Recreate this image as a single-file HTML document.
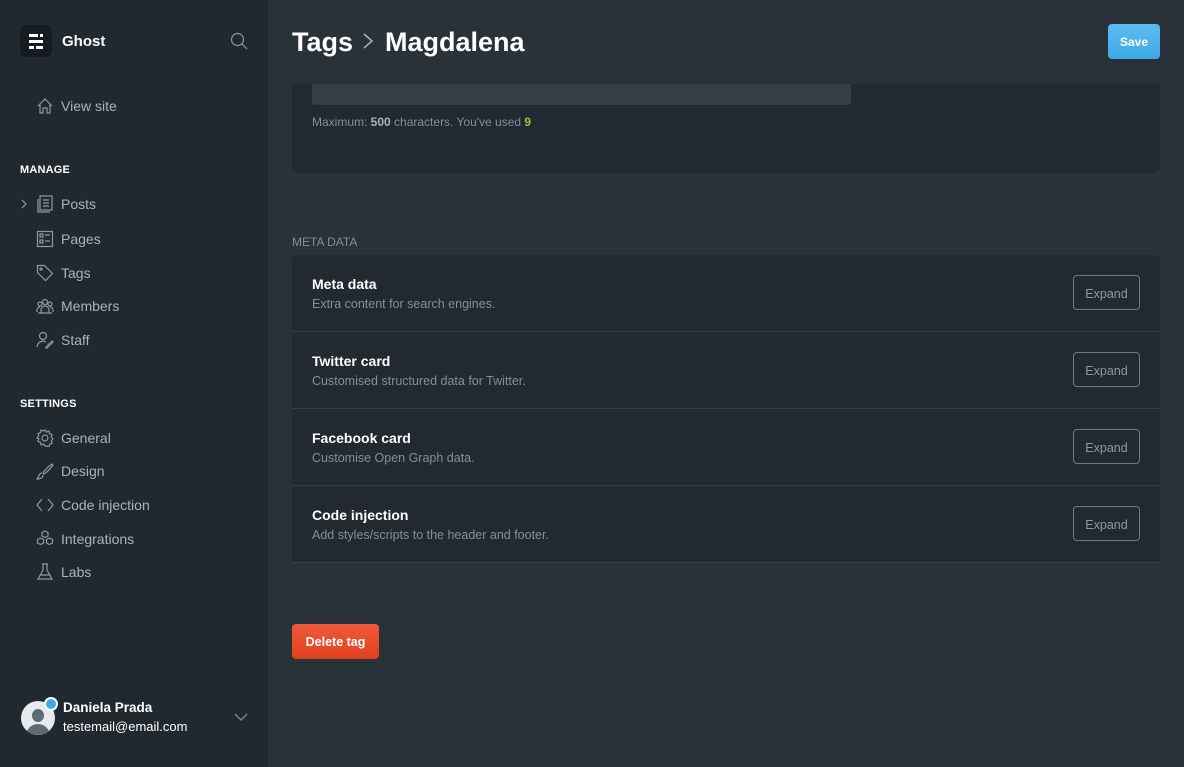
<!DOCTYPE html>
<html><head><meta charset="utf-8"><style>
*{box-sizing:border-box;margin:0;padding:0}
body{width:1184px;height:767px;overflow:hidden;background:#283238;font-family:"Liberation Sans",sans-serif;position:relative;color:#fff}
.sb{position:absolute;left:0;top:0;width:268px;height:767px;background:#212930}
.logo{position:absolute;left:20px;top:25px;width:32px;height:32px;background:#151b20;border-radius:6px}
.logo i{position:absolute;height:3px;background:#fff}
.brand{position:absolute;left:62px;top:33px;font-size:15px;font-weight:bold;color:#fff}
.nav{position:absolute;left:61px;font-size:14px;color:#a6b4bd}
.ic{position:absolute;left:36px;width:18px;height:18px}
.sec{position:absolute;left:20px;font-size:11px;font-weight:bold;color:#fff;letter-spacing:.2px}
h1{position:absolute;left:292px;top:27px;font-size:27px;font-weight:bold;color:#fff}
.save{position:absolute;left:1108px;top:24px;width:52px;height:35px;background:linear-gradient(#5bbcf2,#3ea8e8);border-radius:4px;color:#fff;font-size:12px;font-weight:bold;text-align:center;line-height:37px}
.card1{position:absolute;left:292px;top:84px;width:868px;height:89px;background:#222930;border-radius:0 0 8px 8px}
.ta{position:absolute;left:20px;top:0;width:539px;height:21px;background:#343e45;border-radius:0 0 3px 3px}
.hint{position:absolute;left:20px;top:31px;font-size:12px;color:#7f919c}
.lbl{position:absolute;left:292px;top:235px;font-size:12px;color:#7f919c}
.list{position:absolute;left:292px;top:255px;width:868px;height:308px;background:#222930;border-radius:6px 6px 0 0}
.row{position:absolute;left:0;width:868px;height:77px;border-bottom:1px solid #343e45}
.row b{position:absolute;left:20px;top:21px;font-size:14px;color:#fff}
.row span{position:absolute;left:20px;top:42px;font-size:12.5px;color:#7f919c}
.exp{position:absolute;left:781px;top:20px;width:67px;height:35px;border:1px solid #6b7c86;border-radius:4px;color:#8a9ba5;font-size:12.5px;text-align:center;line-height:36px}
.del{position:absolute;left:292px;top:624px;width:87px;height:35px;background:linear-gradient(#f05a3a,#e0401e);border-radius:4px;color:#fff;font-size:12.5px;font-weight:bold;text-align:center;line-height:37px}
svg{stroke:#8a9aa4;fill:none;stroke-width:1.2}
</style></head><body>
<div class="sb">
<div class="logo"><i style="left:9px;top:9px;width:9px"></i><i style="left:20px;top:9px;width:3px"></i><i style="left:9px;top:15px;width:14px"></i><i style="left:9px;top:21px;width:5px"></i><i style="left:16px;top:21px;width:7px"></i></div>
<div class="brand">Ghost</div>
<svg style="position:absolute;left:230px;top:32px" width="18" height="18" viewBox="0 0 18 18"><circle cx="7.5" cy="7.5" r="6"/><path d="M12 12l5 5"/></svg>
<svg class="ic" style="top:97px" viewBox="0 0 18 18"><path d="M2 9L9 2l7 7M4 7v9h3v-5h4v5h3V7"/></svg>
<div class="nav" style="top:98px">View site</div>
<div class="sec" style="top:164px">MANAGE</div>
<svg style="position:absolute;left:20px;top:198px" width="8" height="12" viewBox="0 0 8 12"><path d="M2 2l4 4-4 4"/></svg>
<svg class="ic" style="top:195px" viewBox="0 0 18 18"><rect x="4" y="1" width="12" height="14"/><path d="M2 4v13h12M7 5h6M7 8h6M7 11h6"/></svg>
<div class="nav" style="top:196px">Posts</div>
<svg class="ic" style="top:230px" viewBox="0 0 18 18"><rect x="1.5" y="1.5" width="15" height="15"/><path d="M4 4h3v3H4zM4 10h3v3H4zM9 5h5M9 11h5"/></svg>
<div class="nav" style="top:231px">Pages</div>
<svg class="ic" style="top:264px" viewBox="0 0 18 18"><path d="M1.5 1.5h7l8 8-7 7-8-8z"/><circle cx="5" cy="5" r="1"/></svg>
<div class="nav" style="top:265px">Tags</div>
<svg class="ic" style="top:297px" viewBox="0 0 18 18"><circle cx="9" cy="5" r="2.5"/><circle cx="4" cy="7" r="2"/><circle cx="14" cy="7" r="2"/><path d="M5 16v-3a4 4 0 018 0v3M1 15v-2a3 3 0 013-3M17 15v-2a3 3 0 00-3-3M2 16h14"/></svg>
<div class="nav" style="top:298px">Members</div>
<svg class="ic" style="top:331px" viewBox="0 0 18 18"><circle cx="7" cy="5" r="3.5"/><path d="M1 16a6 6 0 019-5M10 16l6-6 1 1-6 6h-1z"/></svg>
<div class="nav" style="top:332px">Staff</div>
<div class="sec" style="top:398px">SETTINGS</div>
<svg class="ic" style="top:429px" viewBox="0 0 18 18"><circle cx="9" cy="9" r="3"/><path d="M9 1l1.5 2 2.5-.8.5 2.5 2.5.8-.8 2.5 1.8 2-1.8 2 .8 2.5-2.5.8-.5 2.5-2.5-.8L9 17l-1.5-2-2.5.8-.5-2.5-2.5-.8.8-2.5L1 9l1.8-2L2 4.5l2.5-.8L5 1.2l2.5.8z"/></svg>
<div class="nav" style="top:430px">General</div>
<svg class="ic" style="top:462px" viewBox="0 0 18 18"><path d="M16 2c-3 2-7 6-9 9l1 1c3-2 7-6 9-9zM6 11c-2 0-3 2-3 3l-2 3c3 0 6-1 6-4"/></svg>
<div class="nav" style="top:463px">Design</div>
<svg class="ic" style="top:496px" viewBox="0 0 18 18"><path d="M6 3L1 9l5 6M12 3l5 6-5 6"/></svg>
<div class="nav" style="top:497px">Code injection</div>
<svg class="ic" style="top:530px" viewBox="0 0 18 18"><path d="M9 1l3 1.5v3.5L9 7.5 6 6V2.5zM4.5 8l3 1.5V13l-3 1.5-3-1.5V9.5zM13.5 8l3 1.5V13l-3 1.5-3-1.5V9.5z"/></svg>
<div class="nav" style="top:531px">Integrations</div>
<svg class="ic" style="top:563px" viewBox="0 0 18 18"><path d="M6 1h6M7 1v6L2 16h14l-5-9V1M4 12h10"/></svg>
<div class="nav" style="top:564px">Labs</div>
<div style="position:absolute;left:21px;top:701px;width:34px;height:34px;border-radius:50%;background:#e6eaed;overflow:hidden"><div style="position:absolute;left:11px;top:8px;width:12px;height:13px;border-radius:50%;background:#5f6b72"></div><div style="position:absolute;left:5px;top:23px;width:24px;height:16px;border-radius:12px 12px 0 0;background:#5f6b72"></div></div>
<div style="position:absolute;left:44px;top:697px;width:14px;height:14px;border-radius:50%;background:#3ea8e8;border:2px solid #fff"></div>
<div style="position:absolute;left:63px;top:700px;font-size:13.5px;font-weight:bold;color:#fff">Daniela Prada</div>
<div style="position:absolute;left:63px;top:719px;font-size:13px;color:#fff">testemail@email.com</div>
<svg style="position:absolute;left:233px;top:712px" width="16" height="10" viewBox="0 0 16 10"><path d="M2 2l6 6 6-6"/></svg>
</div>
<h1>Tags<svg width="14" height="20" viewBox="0 0 14 20" style="stroke:#a6b4bd;stroke-width:1.5;margin:0 10px 0 8px"><path d="M3 3l8 7-8 7"/></svg>Magdalena</h1>
<div class="save">Save</div>
<div class="card1"><div class="ta"></div><div class="hint">Maximum: <b style="color:#a6b4bd">500</b> characters. You've used <b style="color:#9fc34a">9</b></div></div>
<div class="lbl">META DATA</div>
<div class="list">
<div class="row" style="top:0"><b>Meta data</b><span>Extra content for search engines.</span><div class="exp">Expand</div></div>
<div class="row" style="top:77px"><b>Twitter card</b><span>Customised structured data for Twitter.</span><div class="exp">Expand</div></div>
<div class="row" style="top:154px"><b>Facebook card</b><span>Customise Open Graph data.</span><div class="exp">Expand</div></div>
<div class="row" style="top:231px"><b>Code injection</b><span>Add styles/scripts to the header and footer.</span><div class="exp">Expand</div></div>
</div>
<div class="del">Delete tag</div>
</body></html>
